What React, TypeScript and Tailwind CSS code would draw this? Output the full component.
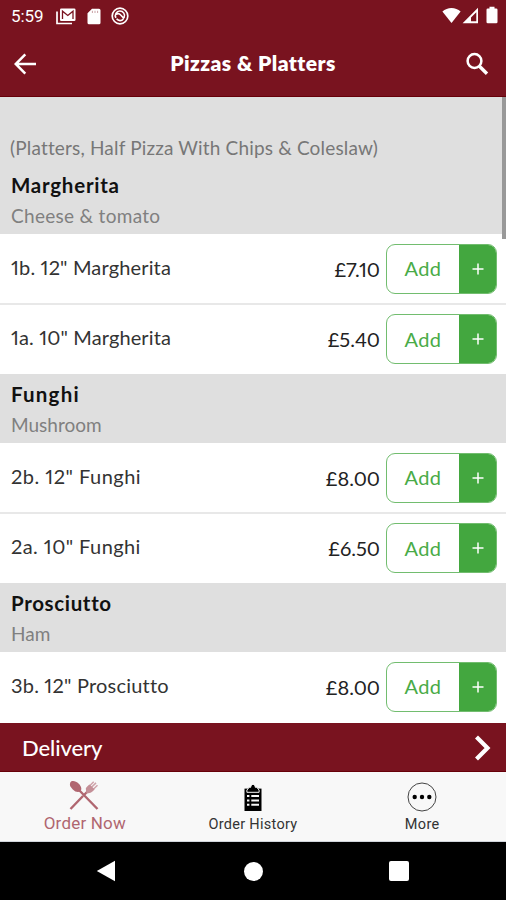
type Item = { name: string; price: string; tracking: string };

type Category = { title: string; titleTracking: string; note: string; noteTracking: string; items: Item[] };

const categories: Category[] = [
  {
    title: 'Margherita',
    titleTracking: 'tracking-[0.75px]',
    note: 'Cheese & tomato',
    noteTracking: 'tracking-[0.3px]',
    items: [
      { name: '1b. 12" Margherita', price: '£7.10', tracking: 'tracking-[0.15px]' },
      { name: '1a. 10" Margherita', price: '£5.40', tracking: 'tracking-[0.12px]' },
    ],
  },
  {
    title: 'Funghi',
    titleTracking: 'tracking-[1.2px]',
    note: 'Mushroom',
    noteTracking: 'tracking-normal',
    items: [
      { name: '2b. 12" Funghi', price: '£8.00', tracking: 'tracking-[0.48px]' },
      { name: '2a. 10" Funghi', price: '£6.50', tracking: 'tracking-[0.42px]' },
    ],
  },
  {
    title: 'Prosciutto',
    titleTracking: 'tracking-[0.65px]',
    note: 'Ham',
    noteTracking: 'tracking-normal',
    items: [{ name: '3b. 12" Prosciutto', price: '£8.00', tracking: 'tracking-[0.2px]' }],
  },
];

function StatusBar() {
  return (
    <div className="flex h-8 items-center justify-between pr-2 pl-[11px]">
      <div className="flex items-center">
        <span className="w-[45px] font-[Roboto] text-[17px] leading-none tracking-[-0.1px]">5:59</span>
        <svg width="20" height="17" viewBox="0 0 20 17" fill="none">
          <path d="M1 3.5V15.5H16" stroke="currentColor" strokeWidth="1.7" />
          <rect x="4" y="0.5" width="15.5" height="12.5" rx="1.3" fill="currentColor" />
          <path d="M6.5 11V3.2L11.8 7.4L17 3.2V11" stroke="#79131f" strokeWidth="1.3" />
        </svg>
        <svg className="ml-[10.5px]" width="14" height="17" viewBox="0 0 14 17">
          <path d="M5 .8H12A1.5 1.5 0 0 1 13.5 2.3V14.7A1.5 1.5 0 0 1 12 16.2H2A1.5 1.5 0 0 1 .5 14.7V5.3Z" fill="currentColor" />
          <path d="M5.4 2.8V5M8 2.8V5M10.6 2.8V5" stroke="#79131f" strokeWidth=".4" />
        </svg>
        <svg className="ml-[10.5px]" width="18" height="18" viewBox="0 0 18 18" fill="none" stroke="currentColor">
          <circle cx="9" cy="9" r="7.8" strokeWidth="1.7" />
          <path d="M4.9 10.8A4.6 4.6 0 1 1 13.1 10.6M5 7.4C7 6 8.5 6.6 9.7 8L13.1 11.6M5.6 11.8C7.4 14.2 10.6 14.1 12.4 12" strokeWidth="1.6" />
        </svg>
      </div>
      <div className="flex items-center pb-[2px]">
        <svg width="19" height="17" viewBox="0 0 19 17">
          <path d="M.4 4.6C5.3-.1 13.7-.1 18.6 4.6L9.5 16Z" fill="currentColor" />
        </svg>
        <svg className="ml-[1px]" width="17" height="17" viewBox="0 0 17 17">
          <path d="M16 .8V16.2H.6ZM14.3 5.2 9 10.4V14.3H14.3Z" fill="currentColor" fillRule="evenodd" />
        </svg>
        <svg className="ml-[7px]" width="12" height="18" viewBox="0 0 12 18">
          <path d="M3.5 .7H8.5V2.5H10.2A1.3 1.3 0 0 1 11.5 3.8V16A1.3 1.3 0 0 1 10.2 17.3H1.8A1.3 1.3 0 0 1 .5 16V3.8A1.3 1.3 0 0 1 1.8 2.5H3.5Z" fill="currentColor" />
        </svg>
      </div>
    </div>
  );
}

function Toolbar() {
  return (
    <div className="flex h-16 items-center justify-between pr-[17px] pl-[14px]">
      <svg width="23" height="22" viewBox="0 0 23 22" fill="none" stroke="currentColor" strokeWidth="2.5">
        <path d="M22 11H2M11.3 1.3 1.7 11 11.3 20.7" />
      </svg>
      <h1 className="-mt-[3px] ml-1 text-[21px] leading-none font-extrabold tracking-[0.43px]">Pizzas &amp; Platters</h1>
      <svg width="24" height="24" viewBox="0 0 24 24" fill="none" stroke="currentColor">
        <circle cx="9.5" cy="9" r="6.9" strokeWidth="2.5" />
        <path d="M14.2 14 22 21.8" strokeWidth="3.4" />
      </svg>
    </div>
  );
}

function ItemRow({ item }: { item: Item }) {
  return (
    <li className="flex h-[70.5px] items-center border-b-2 border-[#e8e8e8] pt-px pr-[9px] pl-[11px] proportional-nums last:h-[69px] last:border-b-0 last:pt-0">
      <span className={`-mt-[4px] flex-1 text-[20px] leading-none text-[#333] ${item.tracking}`}>{item.name}</span>
      <span className="mr-[6px] text-[20px] leading-none text-[#222]">{item.price}</span>
      <button className="flex h-[50px] w-[111px] overflow-hidden rounded-[9px] border-[1.5px] border-[#72bd6f] text-[#49ab47]">
        <span className="flex h-full flex-1 items-center justify-center pb-px text-[20px] tracking-[0.4px]">Add</span>
        <span className="flex h-full w-[37px] items-center justify-center bg-[#43a73f] text-white">
          <svg width="12" height="12" viewBox="0 0 12 12" stroke="currentColor" strokeWidth="1.5">
            <path d="M6 .5V11.5M.5 6H11.5" />
          </svg>
        </span>
      </button>
    </li>
  );
}

function BottomTabs() {
  return (
    <nav className="grid h-[70px] shrink-0 grid-cols-3 border-b border-gray-300 bg-[#f8f8f8] font-[Roboto] text-[#333]">
      <a className="flex flex-col items-center pt-2 text-[#b06670]">
        <svg width="30" height="31" viewBox="0 0 30 31" fill="none">
          <path d="M9 9 28.5 29M15 15 22 8M14 16 1.5 29" stroke="currentColor" strokeWidth="2.4" />
          <path d="M1.1 3C1.7 0 6.6.4 9.8 3.7 12.7 6.7 13 9.5 11.4 11S6.4 12.2 3.8 9.4 .5 5.8 1.1 3Z" fill="currentColor" />
          <path d="M18 8.5 24.7 1.8M20.5 9.2 27 2.9M22.5 11 28.5 5.3" stroke="#cfa3aa" strokeWidth="1.5" />
          <path d="M16.8 8.6C17.6 6.8 19.3 5.6 20.5 4.6L25.6 9.3C24.2 10.9 22.6 12.6 20.7 12.9L17.4 13.4Z" fill="#c48f97" />
        </svg>
        <span className="mt-[2px] ml-px text-[17px] leading-[20px] tracking-[0.2px]">Order Now</span>
      </a>
      <a className="flex flex-col items-center pt-3">
        <svg width="18" height="28" viewBox="0 0 18 28">
          <path d="M.5 4.6H17.5V27H.5Z" fill="#000" />
          <path d="M2.9 8.3V6.1L5.2 3.3H6.7C6.9 1.3 7.7.4 9 .4S11.1 1.3 11.3 3.3H12.8L15.1 6.1V8.3Z" fill="#000" stroke="#f8f8f8" strokeWidth="1" />
          <path d="M3 12H5.4M7.3 12H15M3 16.4H5.4M7.3 16.4H15M3 20.8H5.4M7.3 20.8H15" stroke="#f8f8f8" strokeWidth="2" />
        </svg>
        <span className="mt-[4px] text-[14.5px] leading-[18px] tracking-[0.28px]">Order History</span>
      </a>
      <a className="flex flex-col items-center pt-[10px]">
        <svg width="30" height="30" viewBox="0 0 30 30">
          <circle cx="15" cy="15" r="14" fill="none" stroke="#444" strokeWidth="1" />
          <g fill="#000">
            <circle cx="7.7" cy="15" r="2.2" />
            <circle cx="15" cy="15" r="2.2" />
            <circle cx="22.3" cy="15" r="2.2" />
          </g>
        </svg>
        <span className="mt-[4px] ml-px text-[14.5px] leading-[18px] tracking-[0.3px]">More</span>
      </a>
    </nav>
  );
}

function SystemNav() {
  return (
    <div className="flex h-[58px] shrink-0 items-center justify-between bg-black pr-[97px] pl-[96px]">
      <svg width="20" height="22" viewBox="0 0 20 22" fill="#fff">
        <path d="M19 .8V21.2L.8 11Z" />
      </svg>
      <span className="ml-[2px] size-[19px] rounded-full bg-white" />
      <span className="size-5 rounded-[2px] bg-white" />
    </div>
  );
}

export default function App() {
  return (
    <div className="flex h-[900px] w-[506px] flex-col overflow-hidden bg-white font-[Lato,sans-serif]">
      <header className="h-[97px] shrink-0 border-b border-[#670009] bg-[#79131f] text-white">
        <StatusBar />
        <Toolbar />
      </header>

      <main className="relative h-[626px] shrink-0 overflow-hidden">
        <p className="h-[67.5px] bg-[#dfdfdf] pt-[40px] pl-[10px] text-[19px] leading-[22px] tracking-[0.17px] text-[#777]">
          (Platters, Half Pizza With Chips &amp; Coleslaw)
        </p>
        {categories.map((category) => (
          <section key={category.title}>
            <div className="h-[69.5px] bg-[#dfdfdf] pt-[8px] pl-[11px]">
              <h2 className={`text-[20.5px] leading-6 font-bold text-[#111] ${category.titleTracking}`}>{category.title}</h2>
              <p className={`mt-[8px] text-[19px] leading-[22px] text-[#808080] ${category.noteTracking}`}>{category.note}</p>
            </div>
            <ul>
              {category.items.map((item) => (
                <ItemRow key={item.name} item={item} />
              ))}
            </ul>
          </section>
        ))}
        {/* Scroll indicator */}
        <span className="absolute top-0 right-0 h-[142px] w-[4px] bg-[#999]" />
      </main>

      <button className="flex h-[49px] shrink-0 items-center justify-between border-b border-[#670009] bg-[#79131f] pt-px pr-[15px] pl-[22px] text-white">
        <span className="text-[22px] leading-none font-medium tracking-[-0.1px]">Delivery</span>
        <svg width="17" height="26" viewBox="0 0 17 26" fill="none" stroke="currentColor" strokeWidth="4.2">
          <path d="M2.5 2 13.5 13 2.5 24" />
        </svg>
      </button>

      <BottomTabs />
      <SystemNav />
    </div>
  );
}
